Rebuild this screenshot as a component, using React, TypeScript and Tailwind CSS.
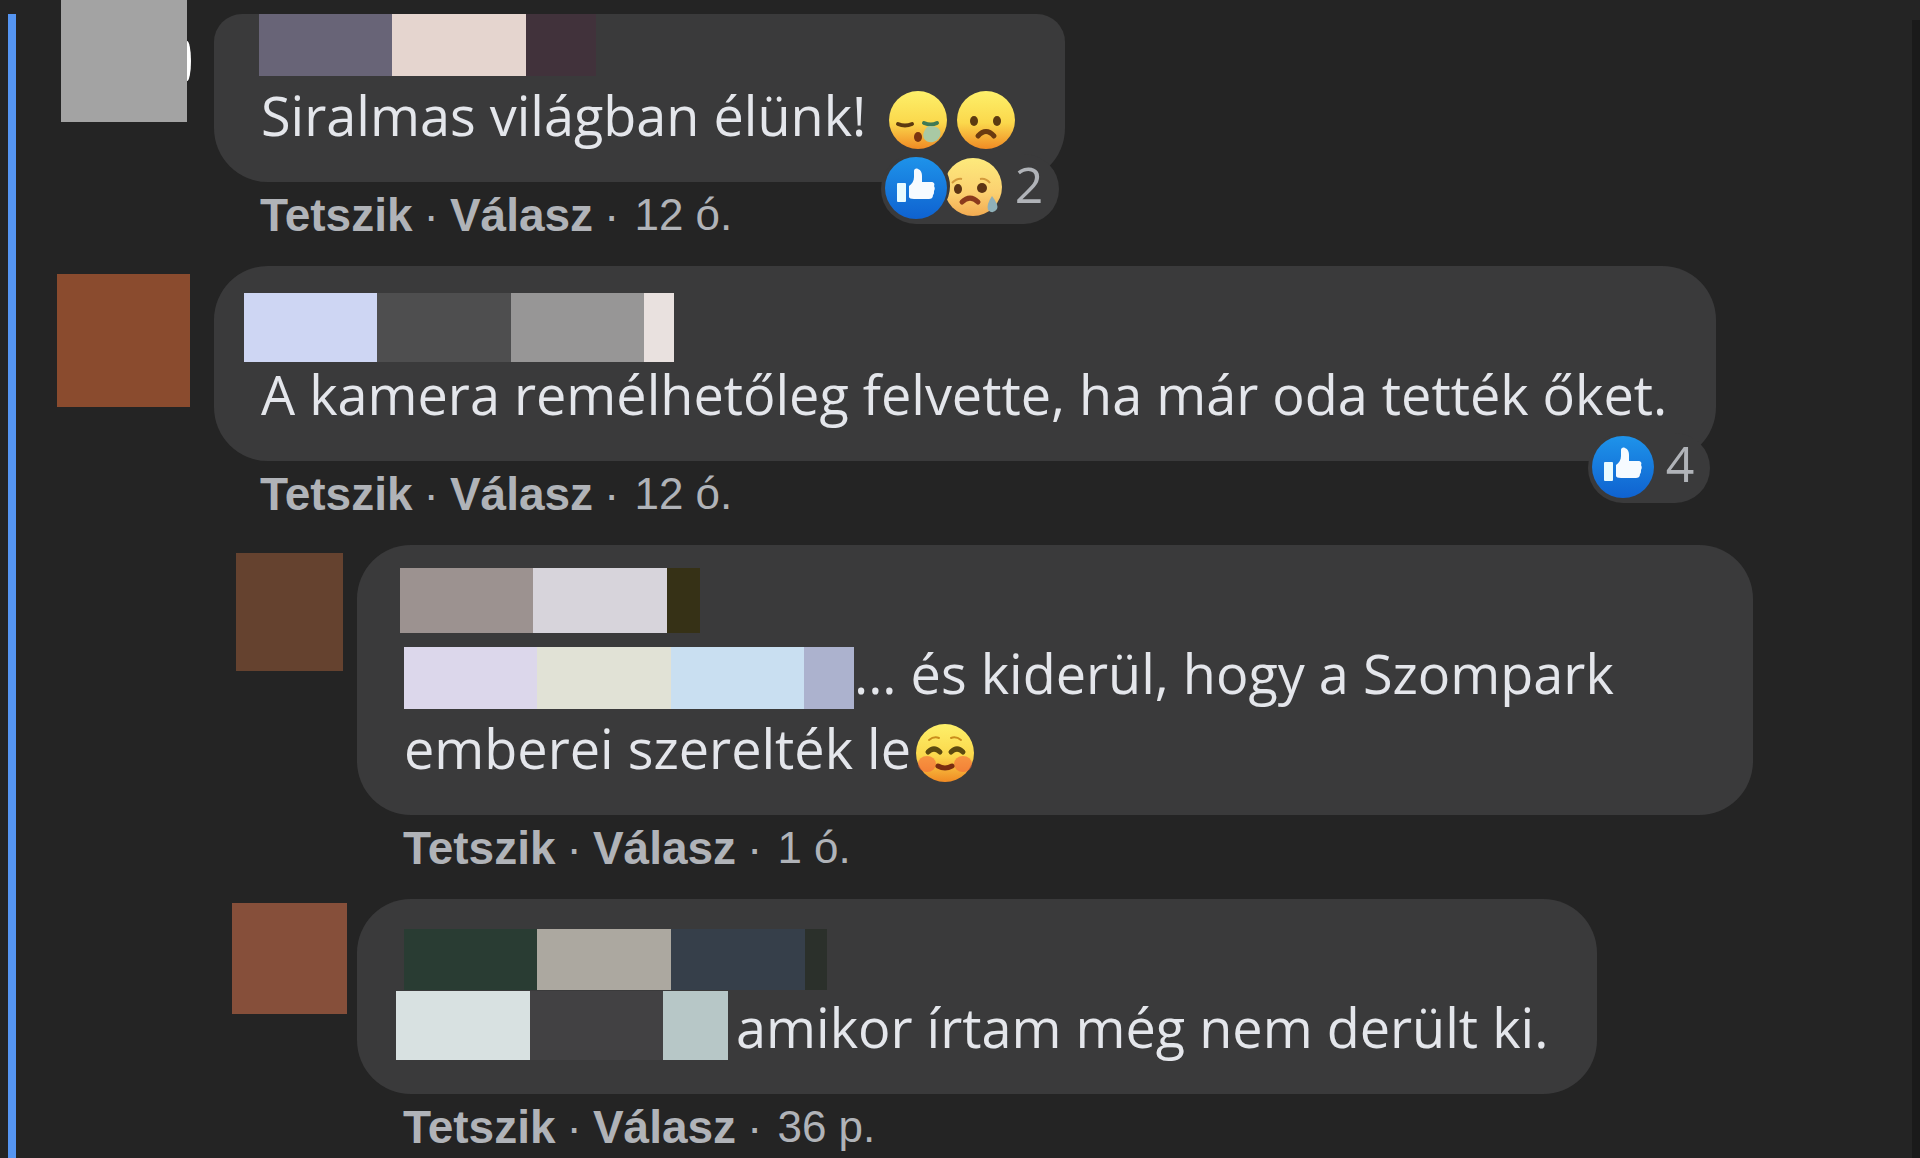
import type { ReactNode } from "react";

type Segment = string;

function Bars({ segments, className }: { segments: Segment[]; className: string }) {
  return (
    <span className={className} aria-hidden="true">
      {segments.map((s) => (
        <span key={s} className={`shrink-0 ${s}`} />
      ))}
    </span>
  );
}

function Face({ id, className, children }: { id: string; className: string; children: ReactNode }) {
  return (
    <svg viewBox="0 0 60 60" className={className} aria-hidden="true">
      <defs>
        <linearGradient id={id} x1="0" y1="0" x2="0" y2="1">
          <stop offset="0" stopColor="#fdf06a" />
          <stop offset="0.55" stopColor="#fbd84c" />
          <stop offset="1" stopColor="#f08a24" />
        </linearGradient>
      </defs>
      <circle cx="30" cy="30" r="29" fill={`url(#${id})`} />
      {children}
    </svg>
  );
}

function SleepyFace() {
  return (
    <Face id="sleepy" className="ml-2 inline-block size-[60px] align-[-14px]">
      <path d="M10 34q7 3 14 0" fill="none" stroke="#5c3a10" strokeWidth="4" strokeLinecap="round" />
      <path d="M36 33q7 3 13 0" fill="none" stroke="#3f7a55" strokeWidth="4" strokeLinecap="round" />
      <path d="M42 36c8 0 12 4 10 10-2 5-7 7-11 6-5-1-7-6-5-10 1-3 3-6 6-6z" fill="#a9c9a4" />
      <ellipse cx="30" cy="47" rx="4" ry="5" fill="#7a3410" />
    </Face>
  );
}

function FrownFace() {
  return (
    <Face id="frown" className="ml-2 inline-block size-[60px] align-[-14px]">
      <ellipse cx="18" cy="31" rx="4" ry="5" fill="#5c3a10" />
      <ellipse cx="41" cy="31" rx="4" ry="5" fill="#5c3a10" />
      <path d="M22 46q8-9 16 0" fill="none" stroke="#6b3a10" strokeWidth="5" strokeLinecap="round" />
    </Face>
  );
}

function BlushFace() {
  return (
    <Face id="blush" className="ml-1 inline-block size-[60px] align-[-14px]">
      <ellipse cx="12" cy="41" rx="9" ry="8" fill="#f4673a" opacity="0.6" />
      <ellipse cx="48" cy="41" rx="9" ry="8" fill="#f4673a" opacity="0.6" />
      <path d="M14 17q5-4 10-2M36 15q5-2 10 2" fill="none" stroke="#c98d1c" strokeWidth="2" strokeLinecap="round" />
      <path d="M13 29q6-6 12 0M36 29q6-6 12 0" fill="none" stroke="#5c4a10" strokeWidth="5" strokeLinecap="round" />
      <path d="M23 43q7 4 14 0" fill="none" stroke="#7a2c10" strokeWidth="5" strokeLinecap="round" />
    </Face>
  );
}

function SadReaction() {
  return (
    <svg viewBox="0 0 60 60" className="-ml-1 size-[60px]" aria-hidden="true">
      <defs>
        <linearGradient id="sad" x1="0" y1="0" x2="0" y2="1">
          <stop offset="0" stopColor="#fdea7c" />
          <stop offset="0.6" stopColor="#fbd070" />
          <stop offset="1" stopColor="#f2ab52" />
        </linearGradient>
        <clipPath id="sad-cut">
          <path d="M0 0H60V60H0V50Q7 40 7 29Q7 20 2 12Z" />
        </clipPath>
      </defs>
      <g clipPath="url(#sad-cut)">
        <circle cx="30" cy="30" r="29" fill="url(#sad)" />
        <path d="M9 26q5-5 10-4M37 22q6-1 10 4" fill="none" stroke="#d39a3c" strokeWidth="2" />
        <ellipse cx="15" cy="32" rx="4" ry="5" fill="#5c3414" />
        <ellipse cx="39" cy="31" rx="5" ry="5" fill="#5c3414" />
        <path d="M19 45q8-8 16 0" fill="none" stroke="#8a3a1c" strokeWidth="5" strokeLinecap="round" />
        <path d="M49 39q7 9 5 13-4 6-9 1-2-5 4-14z" fill="#8fb0b8" />
      </g>
    </svg>
  );
}

function LikeReaction() {
  return (
    <svg viewBox="0 0 62 62" className="size-[62px]" aria-hidden="true">
      <defs>
        <linearGradient id="like" x1="0" y1="0" x2="0" y2="1">
          <stop offset="0" stopColor="#1e93ea" />
          <stop offset="1" stopColor="#0f62d0" />
        </linearGradient>
      </defs>
      <circle cx="31" cy="31" r="31" fill="url(#like)" />
      <rect x="12" y="26" width="9" height="19" rx="1" fill="#e8fbff" />
      <path
        d="M24 29c3-2 5-5 5-9v-6c0-2 2-3 4-2 3 1 4 4 4 7v6h9c3 0 4 2 3 4 1 2 1 3 0 5 0 2 0 3-1 4 0 3-2 4-4 4H29c-3 0-5-1-5-2z"
        fill="#f6fbff"
      />
    </svg>
  );
}

function Reactions({ count, children }: { count: number; children: ReactNode }) {
  return (
    <button
      type="button"
      className="absolute right-1.5 -bottom-[42px] flex h-[70px] items-start rounded-full bg-[#3a3a3b] pt-[3px] pr-4 pl-1 text-[50px] leading-[54px] text-[#b0b3b8]"
    >
      {children}
      <span className="ml-3">{count}</span>
    </button>
  );
}

function Comment({
  avatar,
  bubble = "rounded-[54px] pt-[27px]",
  name,
  nameRow,
  time,
  reactions,
  children,
}: {
  avatar: ReactNode;
  bubble?: string;
  name: Segment[];
  nameRow: string;
  time: string;
  reactions?: ReactNode;
  children: ReactNode;
}) {
  return (
    <article className="flex items-start">
      {avatar}
      <div className="flex min-w-0 flex-col items-start">
        <div className={`relative bg-[#3a3a3b] pr-[49px] pb-[29px] pl-[47px] ${bubble}`}>
          <div className="flex h-16 items-start">
            <Bars segments={name} className={`flex ${nameRow}`} />
          </div>
          <p className="text-[54px] leading-[75px] text-[#e4e6eb]">{children}</p>
          {reactions}
        </div>
        <footer className="mt-[3px] ml-[46px] flex gap-[11px] font-['Liberation_Sans',Arial,sans-serif] text-[46px] leading-[60px] text-[#b0b3b8]">
          <button type="button" className="font-bold">Tetszik</button>
          <span>·</span>
          <button type="button" className="font-bold">Válasz</button>
          <span>·</span>
          <a href="#comment" className="ml-1 text-[44px]">{time}</a>
        </footer>
      </div>
    </article>
  );
}

export default function App() {
  return (
    <div className="flex min-h-screen bg-[#242424] font-['Open_Sans','Noto_Sans',sans-serif]">
      <div className="mt-[14px] ml-2 w-2 shrink-0 bg-[#5595f2]" />
      <main className="flex min-w-0 flex-1 flex-col gap-[21px] pr-[159px]">
        <Comment
          avatar={
            <div className="mr-[23px] ml-[45px] flex shrink-0 items-center">
              <div className="h-[122px] w-[126px] bg-[#a3a3a3]" />
              <div className="h-10 w-1 rounded-[0_100%_100%_0/0_50%_50%_0] bg-white" />
            </div>
          }
          bubble="mt-[14px] rounded-t-[28px] rounded-b-[54px]"
          name={["w-[133px] bg-[#686477]", "w-[134px] bg-[#e5d5cf]", "w-[70px] bg-[#41323b]"]}
          nameRow="-ml-[2px] h-[62px]"
          time="12 ó."
          reactions={
            <Reactions count={2}>
              <LikeReaction />
              <SadReaction />
            </Reactions>
          }
        >
          Siralmas világban élünk! <SleepyFace />
          <FrownFace />
        </Comment>
        <Comment
          avatar={<div className="mt-2 mr-6 ml-[41px] size-[133px] shrink-0 bg-[#8a4b2e]" />}
          name={["w-[133px] bg-[#ced6f3]", "w-[134px] bg-[#4e4e4f]", "w-[133px] bg-[#979696]", "w-[30px] bg-[#e9e1df]"]}
          nameRow="-ml-[17px] h-[69px]"
          time="12 ó."
          reactions={
            <Reactions count={4}>
              <LikeReaction />
            </Reactions>
          }
        >
          A kamera remélhetőleg felvette, ha már oda tették őket.
        </Comment>
        <Comment
          avatar={<div className="mt-2 mr-[14px] ml-[220px] h-[118px] w-[107px] shrink-0 bg-[#65422f]" />}
          name={["w-[133px] bg-[#9c9290]", "w-[134px] bg-[#d7d4db]", "w-[33px] bg-[#363116]"]}
          nameRow="-mt-1 -ml-1 h-[65px]"
          time="1 ó."
        >
          <Bars
            segments={["w-[133px] bg-[#dcd7eb]", "w-[134px] bg-[#e1e2d6]", "w-[133px] bg-[#c9dff1]", "w-[50px] bg-[#acb2ce]"]}
            className="inline-flex h-[62px] align-[-15px]"
          />
          ... és kiderül, hogy a Szompark emberei szerelték le
          <BlushFace />
        </Comment>
        <Comment
          avatar={<div className="mt-1 mr-[10px] ml-[216px] h-[111px] w-[115px] shrink-0 bg-[#864f3a]" />}
          name={["w-[133px] bg-[#293c33]", "w-[134px] bg-[#aca8a0]", "w-[134px] bg-[#363f4a]", "w-[22px] bg-[#2b302b]"]}
          nameRow="mt-[3px] h-[61px]"
          time="36 p."
        >
          <Bars
            segments={["w-[134px] bg-[#d8e1e1]", "w-[133px] bg-[#424143]", "w-[65px] bg-[#b7c7c7]"]}
            className="mr-2 -ml-2 inline-flex h-[69px] align-[-12px]"
          />
          amikor írtam még nem derült ki.
        </Comment>
      </main>
      <div className="mt-5 w-2 shrink-0 bg-[#1a1a1a]" />
    </div>
  );
}
